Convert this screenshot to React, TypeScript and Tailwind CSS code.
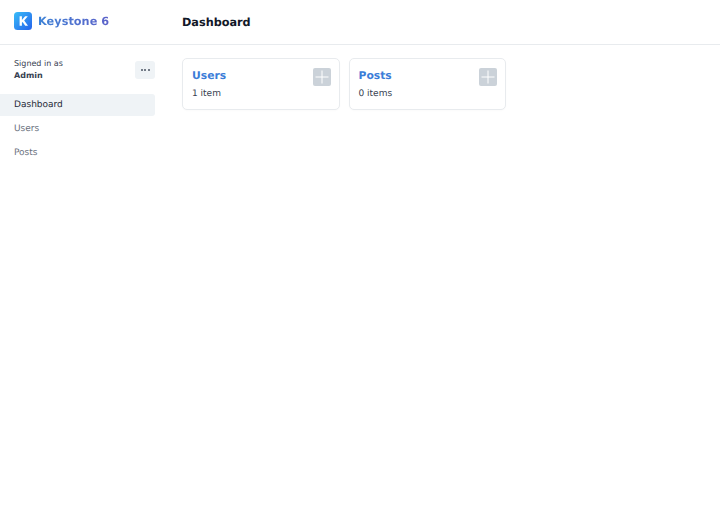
export default function App() {
  const nav = ["Users", "Posts"];
  const cards = [
    { name: "Users", count: "1 item" },
    { name: "Posts", count: "0 items" },
  ];
  return (
    <div className="min-h-[506px] w-[720px] bg-white font-['DejaVu_Sans',sans-serif] text-[#374151] [text-rendering:geometricPrecision]">
      <header className="flex h-[45px] border-b border-[#e8ebee]">
        <div className="flex w-[182px] items-center gap-[6px] pl-[14px] pb-[2px]">
          <svg width="18" height="18" viewBox="0 0 18 18" className="shrink-0">
            <defs>
              <linearGradient id="k" x1="0" y1="0" x2="1" y2="1">
                <stop offset="0" stopColor="#38bdf8" />
                <stop offset="1" stopColor="#2563eb" />
              </linearGradient>
            </defs>
            <rect width="18" height="18" rx="3.5" fill="url(#k)" />
            <path d="M5.6 4.2h2.3v3.9l3.2-3.9h2.7l-3.6 4.2 3.8 5.4h-2.8L8.6 9.9 7.9 10.7v3.1H5.6z" fill="#fff" />
          </svg>
          <span className="mt-[3px] bg-gradient-to-r from-[#3b82d6] to-[#5b62c9] bg-clip-text text-[11.25px] font-semibold tracking-[0.05px] text-transparent">
            Keystone 6
          </span>
        </div>
        <div className="flex items-center pt-[2px] text-[11.25px] font-bold text-[#111827]">Dashboard</div>
      </header>
      <div className="flex">
        <aside className="w-[182px] shrink-0 pt-[13px]">
          <div className="flex w-[155px] items-start justify-between pl-[14px]">
            <div className="text-[8px] leading-[12px]">
              <div>Signed in as</div>
              <div className="font-bold">Admin</div>
            </div>
            <div className="mt-[3px] flex h-[18px] w-[20px] items-center justify-center gap-[1.5px] rounded-[3px] bg-[#eff3f6]">
              <span className="h-[2px] w-[2px] rounded-full bg-[#4b5563]" />
              <span className="h-[2px] w-[2px] rounded-full bg-[#4b5563]" />
              <span className="h-[2px] w-[2px] rounded-full bg-[#4b5563]" />
            </div>
          </div>
          <nav className="mt-[12px] w-[155px] text-[9px]">
            <div className="flex h-[22px] items-center rounded-r-[3px] bg-[#eff3f6] pl-[14px] pt-[1.5px] text-[#1f2937]">Dashboard</div>
            {nav.map((n) => (
              <div key={n} className="mt-[2px] flex h-[22px] items-center pl-[14px] pt-[1.5px] text-[#6b7280]">
                {n}
              </div>
            ))}
          </nav>
        </aside>
        <main className="flex flex-1 items-start gap-[9px] pt-[13px]">
          {cards.map((c) => (
            <div key={c.name} className="relative h-[52px] w-[157.5px] rounded-[5px] border border-[#e8ebee] bg-white pl-[9px] pt-[8.5px] shadow-[0_1px_2px_rgba(0,0,0,0.02)]">
              <div className="text-[10.75px] leading-[16px] font-bold text-[#3b7dd8]">{c.name}</div>
              <div className="mt-[3px] text-[9px] leading-[14px] text-[#374151]">{c.count}</div>
              <div className="absolute right-[8px] top-[8.5px] flex h-[18px] w-[18px] items-center justify-center rounded-[2px] bg-[#cbd2d9]">
                <svg width="14" height="14" viewBox="0 0 14 14">
                  <path d="M7 0.5v13M0.5 7h13" stroke="#fff" strokeWidth="1" />
                </svg>
              </div>
            </div>
          ))}
        </main>
      </div>
    </div>
  );
}
